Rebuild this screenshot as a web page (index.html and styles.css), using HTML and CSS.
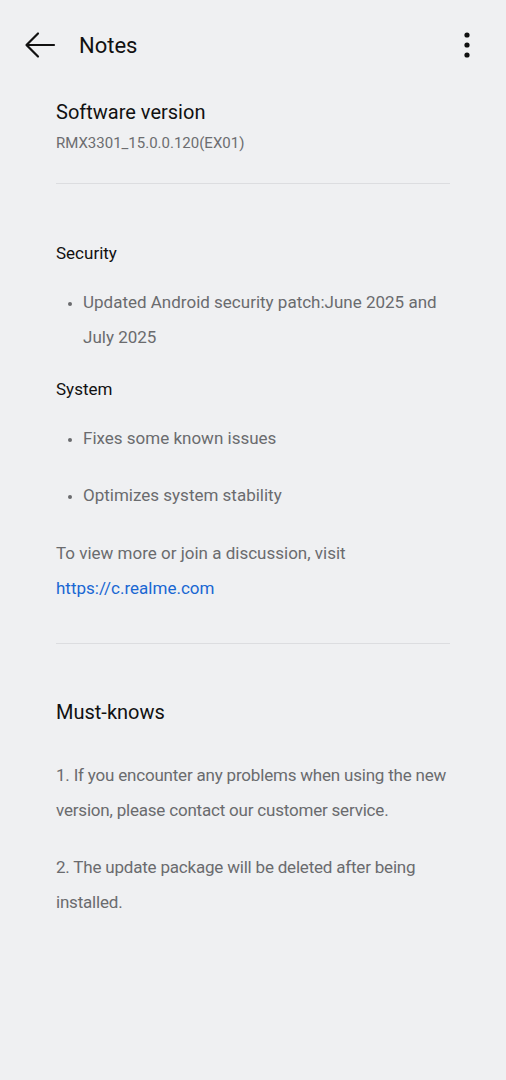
FILE: index.html
```html
<!DOCTYPE html>
<html lang="en">
<head>
  <meta charset="UTF-8">
  <title>Notes</title>
  <link rel="stylesheet" href="styles.css">
</head>
<body>

<div class="topbar">
  <svg class="back" width="32" height="28" viewBox="0 0 32 28">
    <path d="M30 14H3M14 2.5L2.5 14L14 25.5" fill="none" stroke="#111" stroke-width="2.2" stroke-linecap="round" stroke-linejoin="round"/>
  </svg>
  <div class="title">Notes</div>
  <svg class="more" width="10" height="28" viewBox="0 0 10 28">
    <circle cx="5" cy="4" r="2.6" fill="#111"/>
    <circle cx="5" cy="14" r="2.6" fill="#111"/>
    <circle cx="5" cy="24" r="2.6" fill="#111"/>
  </svg>
</div>

<div class="content">
  <div class="version">
    <div class="heading">Software version</div>
    <div class="sub">RMX3301_15.0.0.120(EX01)</div>
  </div>

  <div class="divider"></div>

  <div class="notes">
    <div class="label">Security</div>
    <ul class="list">
      <li>Updated Android security patch:June 2025 and July 2025</li>
    </ul>
    <div class="label">System</div>
    <ul class="list">
      <li>Fixes some known issues</li>
      <li>Optimizes system stability</li>
    </ul>
    <p class="text">To view more or join a discussion, visit <a href="#">https://c.realme.com</a></p>
  </div>

  <div class="divider"></div>

  <div class="must">
    <div class="heading">Must-knows</div>
    <p class="text">1. If you encounter any problems when using the new version, please contact our customer service.</p>
    <p class="text">2. The update package will be deleted after being installed.</p>
  </div>
</div>

</body>
</html>
```

FILE: styles.css
```css
html, body{
  margin: 0;
  padding: 0;
}
body{
  background: #eff0f2;
  font-family: Roboto, "Noto Sans", sans-serif;
  color: #111;
  width: 506px;
  height: 1080px;
}
.topbar{
  display: flex;
  align-items: center;
  height: 90px;
  padding: 0 34px 0 24px;
  box-sizing: border-box;
}
.back{
  display: block;
}
.title{
  flex: 1;
  margin-left: 23px;
  font-size: 22px;
  color: #111;
}
.more{
  display: block;
}
.content{
  padding: 0 56px;
}
.version{
  padding-top: 8px;
}
.heading{
  font-size: 20px;
  line-height: 28px;
  color: #111;
}
.sub{
  font-size: 15px;
  line-height: 20px;
  margin-top: 7px;
  color: #6c6d70;
}
.divider{
  height: 1px;
  background: #dcdde0;
  margin-top: 30px;
}
.notes{
  padding-top: 58px;
  padding-bottom: 7px;
}
.label{
  font-size: 17px;
  line-height: 22px;
  color: #111;
}
.list{
  margin: 21px 0 23px;
  padding-left: 27px;
}
.list li{
  font-size: 17px;
  line-height: 35px;
  color: #6a6b6e;
  margin-bottom: 22px;
}
.list li:last-child{
  margin-bottom: 0;
}
.list li::marker{
  font-size: 13px;
}
.text{
  font-size: 17px;
  line-height: 35px;
  color: #6a6b6e;
  margin: 0;
}
.text a{
  color: #1967d2;
  text-decoration: none;
}
.must{
  padding-top: 54px;
}
.must .heading{
  margin-bottom: 32px;
}
.must .text{
  margin-bottom: 22px;
  letter-spacing: -0.2px;
}
```
